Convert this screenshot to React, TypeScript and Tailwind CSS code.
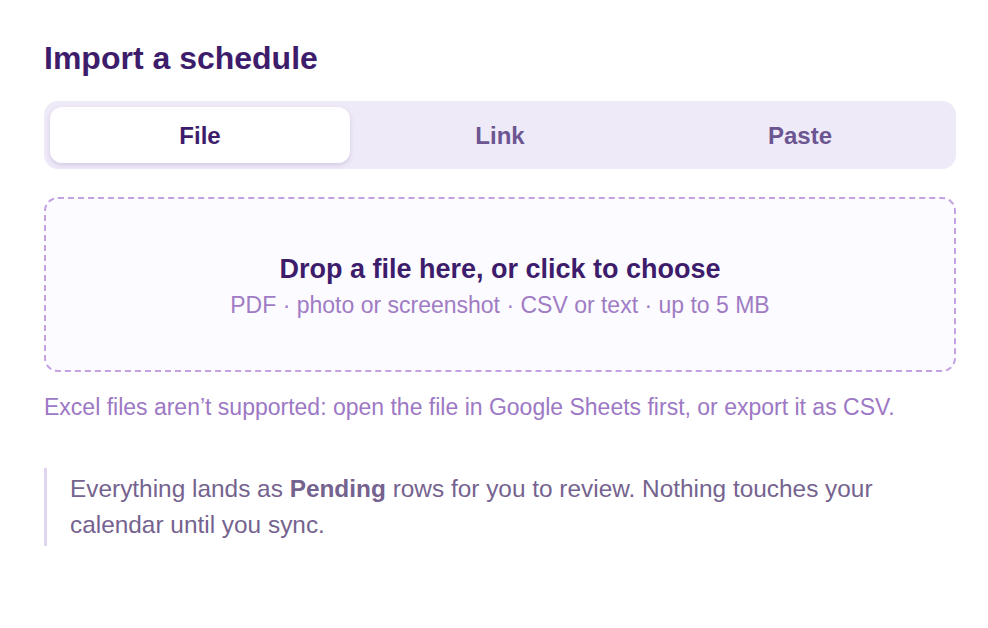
import { useState } from 'react';

const tabs = ['File', 'Link', 'Paste'];

export default function App() {
  const [tab, setTab] = useState('File');

  return (
    <div className="min-h-screen bg-white pl-[44px] pr-[32px] pt-[38px] font-['Liberation_Sans',Arial,sans-serif]">
      <h1 className="text-[32px] font-bold leading-[40px] text-[#3d1d6b]">Import a schedule</h1>

      <div className="mt-[23px] grid grid-cols-3 rounded-[14px] bg-[#efeaf8] p-[6px]">
        {tabs.map((t) => (
          <button
            key={t}
            type="button"
            onClick={() => setTab(t)}
            className={
              t === tab
                ? 'h-[56px] rounded-[12px] bg-white pt-[2px] text-[24px] font-bold text-[#3d1d6b] shadow-[0_2px_5px_rgba(80,50,140,0.18)]'
                : 'h-[56px] rounded-[12px] pt-[2px] text-[24px] font-bold text-[#6b5692]'
            }
          >
            {t}
          </button>
        ))}
      </div>

      <div className="mt-[28px] flex h-[175px] flex-col items-center justify-center rounded-[14px] border-2 border-dashed border-[#c4a2e2] bg-[#fcfbff] pt-[3px]">
        <div className="text-[27px] font-bold leading-[32px] text-[#3d1d6b]">
          Drop a file here, or click to choose
        </div>
        <div className="mt-[6px] text-[23px] leading-[28px] text-[#a07cc4]">
          PDF · photo or screenshot · CSV or text · up to 5 MB
        </div>
      </div>

      <p className="mt-[21px] text-[23px] leading-[28px] text-[#9c78c5]">
        Excel files aren’t supported: open the file in Google Sheets first, or export it as CSV.
      </p>

      <blockquote className="mt-[47px] border-l-[3px] border-[#e1d4f0] py-[3px] pl-[23px] text-[24.4px] leading-[36px] text-[#75638f]">
        <span className="whitespace-nowrap">
          Everything lands as <b className="font-bold">Pending</b> rows for you to review. Nothing touches your
        </span>
        <br />
        calendar until you sync.
      </blockquote>
    </div>
  );
}
